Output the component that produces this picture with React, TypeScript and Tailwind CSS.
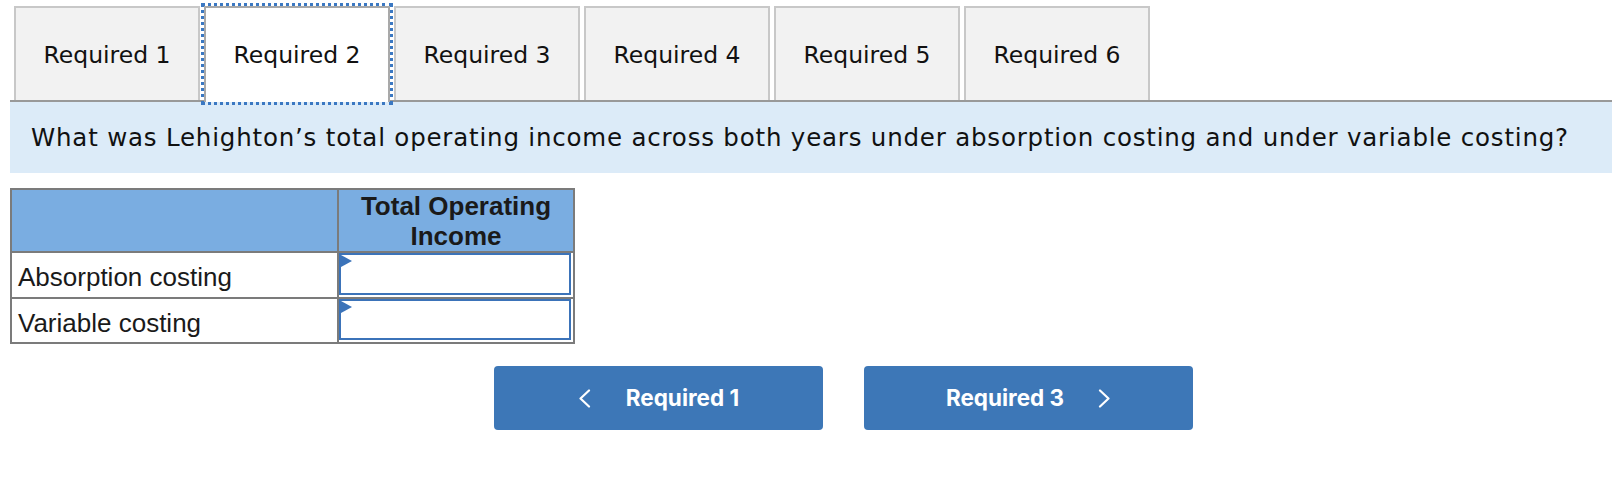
const tabs = ["Required 1", "Required 2", "Required 3", "Required 4", "Required 5", "Required 6"];

function Chevron({ dir }: { dir: "left" | "right" }) {
  return (
    <svg width="13" height="19" viewBox="0 0 13 19" fill="none" aria-hidden="true">
      <polyline
        points={dir === "left" ? "11,1.5 2.5,9.5 11,17.5" : "2,1.5 10.5,9.5 2,17.5"}
        stroke="white"
        strokeWidth="2.2"
        strokeLinecap="round"
        strokeLinejoin="round"
      />
    </svg>
  );
}

function AnswerCell() {
  return (
    <div className="relative flex-1 pr-[2px] pb-[2px]">
      <div className="h-full w-full border-2 border-[#3b73b9] bg-white" />
      <svg className="absolute left-[2px] top-[2px]" width="11" height="12" viewBox="0 0 11 12">
        <polygon points="0,0 11,6 0,12" fill="#3b73b9" />
      </svg>
    </div>
  );
}

export default function App() {
  return (
    <div className="h-[492px] w-full bg-white font-['DejaVu_Sans',Verdana,sans-serif] text-[#111]">
      <div className="flex items-end gap-[4px] pl-[14px] pt-[6px]">
        {tabs.map((t, i) =>
          i === 1 ? (
            <div
              key={t}
              className="relative z-10 -mb-[2px] flex h-[96px] w-[186px] items-center justify-center border-2 border-b-0 border-[#a9a9a9] bg-white pt-[2px] text-[23.5px] outline-[3px] outline-offset-0 outline-[#3b78c2] outline-dotted"
            >
              {t}
            </div>
          ) : (
            <div
              key={t}
              className="flex h-[94px] w-[186px] items-center justify-center border-2 border-b-0 border-[#c8c8c8] bg-[#f2f2f2] pt-[4px] text-[23.5px]"
            >
              {t}
            </div>
          )
        )}
      </div>
      <div className="ml-[10px] flex h-[73px] items-center border-t-2 border-[#999] bg-[#dcebf8] pl-[21px] pt-[2px] text-[24.5px] tracking-[0.8px]">
        What was Lehighton’s total operating income across both years under absorption costing and under variable costing?
      </div>

      <div className="ml-[10px] mt-[15px] w-[565px] border-2 border-[#7b7b7b] font-['Liberation_Sans',Arial,sans-serif] text-[26px] text-[#1a1a1a]">
        <div className="flex h-[61px] bg-[#7aade1]">
          <div className="w-[327px] border-r-2 border-[#7b7b7b]" />
          <div className="flex-1 pt-[1px] text-center font-bold leading-[30px]">
            Total Operating
            <br />
            Income
          </div>
        </div>
        <div className="flex h-[46px] border-t-2 border-[#7b7b7b]">
          <div className="flex w-[327px] items-center border-r-2 border-[#7b7b7b] pl-[6px] pt-[5px]">
            Absorption costing
          </div>
          <AnswerCell />
        </div>
        <div className="flex h-[45px] border-t-2 border-[#7b7b7b]">
          <div className="flex w-[327px] items-center border-r-2 border-[#7b7b7b] pl-[6px] pt-[5px]">
            Variable costing
          </div>
          <AnswerCell />
        </div>
      </div>

      <div className="mt-[22px] flex gap-[41px] pl-[494px] font-['Inter',sans-serif] text-[22.5px] font-bold text-white">
        <button
          type="button"
          className="flex h-[64px] w-[329px] items-center justify-center gap-[35px] rounded-[4px] bg-[#3d77b7]"
        >
          <Chevron dir="left" />
          <span>Required 1</span>
        </button>
        <button
          type="button"
          className="flex h-[64px] w-[329px] items-center justify-center gap-[34px] rounded-[4px] bg-[#3d77b7]"
        >
          <span>Required 3</span>
          <Chevron dir="right" />
        </button>
      </div>
    </div>
  );
}
